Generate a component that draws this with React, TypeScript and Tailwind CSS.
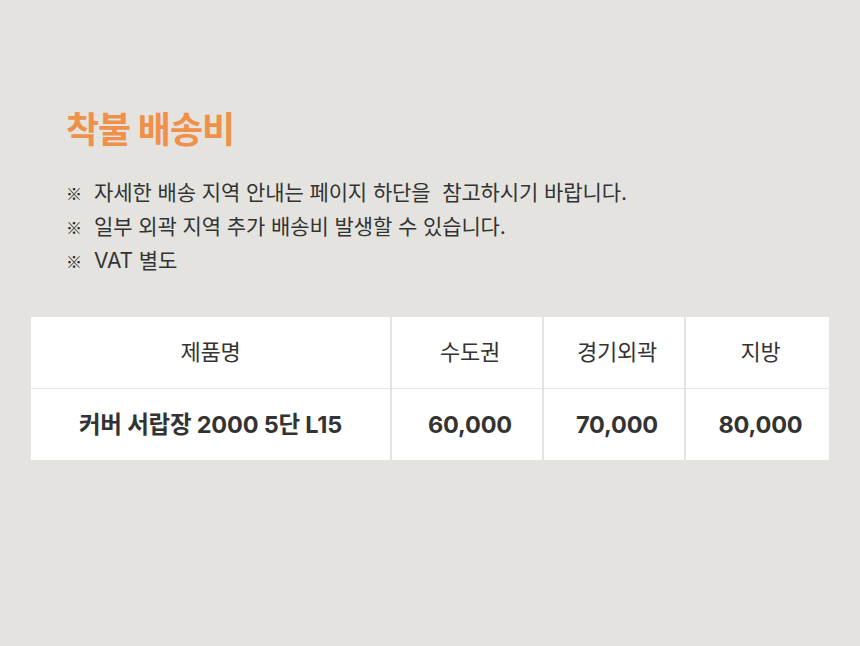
const notes = [
  '자세한 배송 지역 안내는 페이지 하단을\u00a0 참고하시기 바랍니다.',
  '일부 외곽 지역 추가 배송비 발생할 수 있습니다.',
  'VAT 별도',
]

const heads = ['제품명', '수도권', '경기외곽', '지방']
const row = ['커버 서랍장 2000 5단 L15', '60,000', '70,000', '80,000']

export default function App() {
  return (
    <div
      className="w-[860px] h-[646px] bg-[#e4e3df] text-[#333333]"
      style={{ fontFamily: 'Inter, "Noto Sans CJK KR", sans-serif' }}
    >
      <div className="pt-[104px] pl-[66px]">
        <h1 className="text-[36px] font-bold leading-[52px] text-[#f0914a] tracking-[-1px]">착불 배송비</h1>
        <ul className="mt-[20px] flex flex-col">
          {notes.map((n) => (
            <li key={n} className="flex items-center h-[34px] text-[21px] tracking-[-0.1px]">
              <span className="w-[28px] text-[16px] font-black text-[#222222] font-['Noto_Sans_CJK_KR']">※</span>
              <span>{n}</span>
            </li>
          ))}
        </ul>
      </div>

      <div className="mt-[39px] ml-[31px] w-[798px]">
        <div className="grid grid-cols-[359px_150px_140px_143px] gap-x-[2px]">
          {heads.map((h, i) => (
            <div
              key={h}
              className={
                i === 0
                  ? 'h-[72px] bg-white border-b border-[#e6e6e6] flex items-center justify-center text-[22px] tracking-[-0.2px]'
                  : 'h-[72px] bg-white border-b border-[#e6e6e6] flex items-center justify-center pl-[6px] text-[22px] tracking-[-0.2px]'
              }
            >
              {h}
            </div>
          ))}
          {row.map((c, i) => (
            <div
              key={c}
              className={
                i === 0
                  ? 'h-[71px] bg-white flex items-center justify-center text-[23.5px] font-bold tracking-[-0.2px]'
                  : 'h-[71px] bg-white flex items-center justify-center pl-[6px] text-[23.5px] font-bold tracking-[-0.2px]'
              }
            >
              {c}
            </div>
          ))}
        </div>
      </div>
    </div>
  )
}
